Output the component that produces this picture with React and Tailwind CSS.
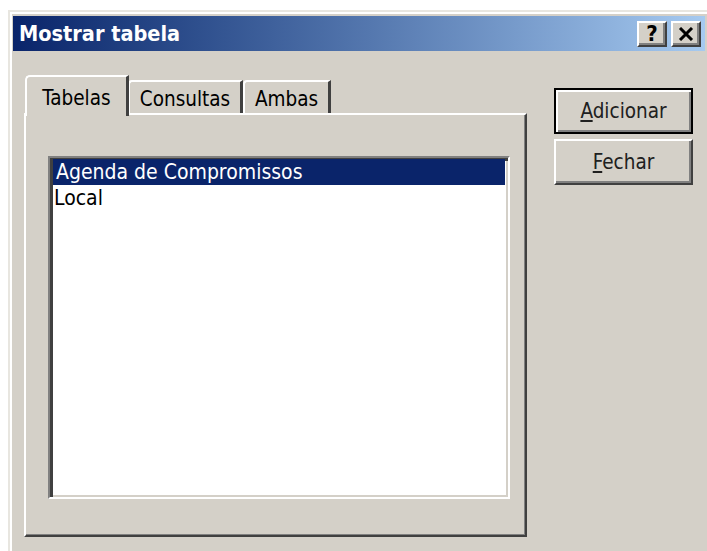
import React from "react";

const FONT = { fontFamily: '"DejaVu Sans Condensed", "DejaVu Sans", sans-serif' };

function CaptionButton({ children }) {
  return (
    <div className="w-[30px] h-[26px] bg-[#d4d0c8] border-t-2 border-l-2 border-t-white border-l-white border-r-2 border-b-2 border-r-[#404040] border-b-[#404040] shadow-[inset_-2px_-2px_0_#808080] flex items-center justify-center">
      {children}
    </div>
  );
}

function Tab({ label, active, className = "" }) {
  if (active) {
    return (
      <div className="relative z-10 -mb-[3px] h-[41px] w-[104px] bg-[#d4d0c8] border-t-2 border-l-2 border-t-white border-l-white border-r-[3px] border-r-[#404040] rounded-tl-[5px] flex items-start justify-center pt-[6px] text-[20.5px] text-black">
        {label}
      </div>
    );
  }
  return (
    <div className={"h-[33px] bg-[#d4d0c8] border-t-2 border-l-2 border-t-white border-l-white border-r-[3px] border-r-[#404040] rounded-tl-[4px] flex items-start justify-center pt-[2px] text-[20.5px] text-black " + className}>
      {label}
    </div>
  );
}

function PushButton({ children, isDefault }) {
  return (
    <div
      className={
        "w-[139px] h-[46px] bg-[#d4d0c8] flex items-center justify-center text-[20.5px] text-[#202020] " +
        (isDefault
          ? "border-2 border-black shadow-[inset_2px_2px_0_#ffffff,inset_-2px_-2px_0_#808080]"
          : "border-t-2 border-l-2 border-t-white border-l-white border-r-2 border-b-2 border-r-[#404040] border-b-[#404040] shadow-[inset_-2px_-2px_0_#808080]")
      }
    >
      {children}
    </div>
  );
}

export default function App() {
  return (
    <div className="w-[707px] h-[551px] bg-white pt-[10px] pl-[8px] overflow-hidden" style={FONT}>
      <div className="w-[710px] h-[560px] bg-[#d4d0c8] border-t-2 border-l-2 border-t-[#e8e6e0] border-l-[#e8e6e0] shadow-[inset_2px_2px_0_#ffffff] pt-[4px] pl-[3px]">
        {/* caption bar */}
        <div className="h-[35px] w-[692px] flex items-center justify-between pl-[6px] pr-[4px] bg-gradient-to-r from-[#0a246a] to-[#a6caf0]">
          <span className="text-white font-bold text-[21.5px] leading-none">Mostrar tabela</span>
          <div className="flex items-center gap-[4px]">
            <CaptionButton>
              <span className="font-bold text-[22px] leading-none text-black">?</span>
            </CaptionButton>
            <CaptionButton>
              <svg width="16" height="14" viewBox="0 0 16 14">
                <path d="M2 1 L14 13 M14 1 L2 13" stroke="#000" strokeWidth="3" />
              </svg>
            </CaptionButton>
          </div>
        </div>

        {/* dialog body */}
        <div className="flex pl-[11px] pt-[24px]">
          <div className="w-[503px] flex flex-col">
            <div className="flex items-end pl-[1px]">
              <Tab label="Tabelas" active />
              <Tab label="Consultas" className="w-[115px] -ml-[1px]" />
              <Tab label="Ambas" className="w-[88px]" />
            </div>
            <div className="h-[424px] border-t-2 border-l-2 border-t-white border-l-white border-r-2 border-b-2 border-r-[#404040] border-b-[#404040] shadow-[inset_-1px_-1px_0_#808080] pl-[22px] pt-[41px]">
              <div className="w-[462px] h-[343px] bg-white border-t-2 border-l-2 border-t-[#808080] border-l-[#808080] border-r-2 border-b-2 border-r-white border-b-white shadow-[inset_3px_3px_0_#404040,inset_-2px_-2px_0_#d4d0c8] pt-[1px] pl-[3px] pr-[3px]">
                <div className="h-[26px] bg-[#0a246a] text-white text-[21px] leading-[26px] pl-[3px]">
                  Agenda de Compromissos
                </div>
                <div className="h-[26px] text-black text-[21px] leading-[26px] pl-[1px]">Local</div>
              </div>
            </div>
          </div>

          <div className="ml-[27px] mt-[13px] flex flex-col gap-[5px]">
            <PushButton isDefault>
              <span><span className="underline">A</span>dicionar</span>
            </PushButton>
            <PushButton>
              <span><span className="underline">F</span>echar</span>
            </PushButton>
          </div>
        </div>
      </div>
    </div>
  );
}
